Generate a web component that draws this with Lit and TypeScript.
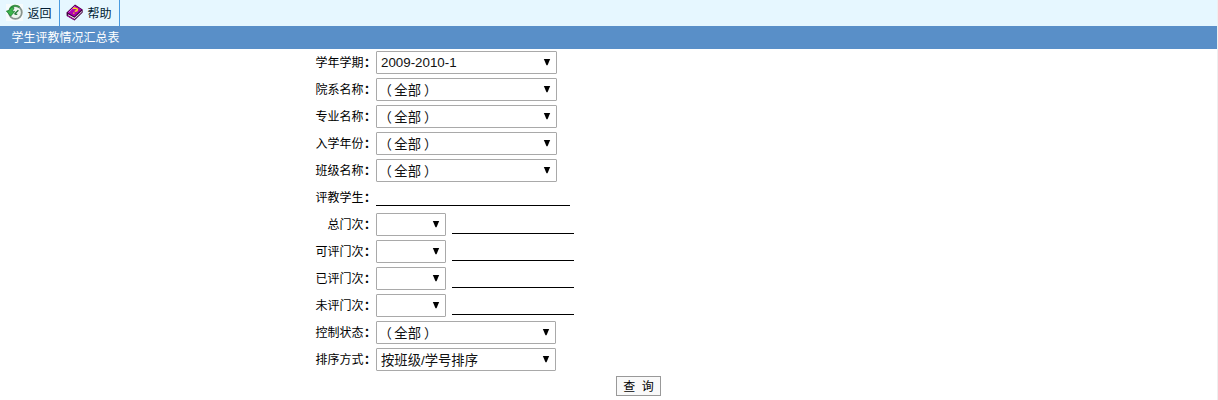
import { LitElement, html, css, svg, nothing } from "lit";
import { customElement, property } from "lit/decorators.js";
import { classMap } from "lit/directives/class-map.js";

interface Row {
  label: string;
  kind: "wide" | "mid" | "text" | "count";
  value?: string;
  cjk?: boolean;
}

const ROWS: Row[] = [
  { label: "学年学期", kind: "wide", value: "2009-2010-1" },
  { label: "院系名称", kind: "wide", value: "（全部）", cjk: true },
  { label: "专业名称", kind: "wide", value: "（全部）", cjk: true },
  { label: "入学年份", kind: "wide", value: "（全部）", cjk: true },
  { label: "班级名称", kind: "wide", value: "（全部）", cjk: true },
  { label: "评教学生", kind: "text" },
  { label: "总门次", kind: "count" },
  { label: "可评门次", kind: "count" },
  { label: "已评门次", kind: "count" },
  { label: "未评门次", kind: "count" },
  { label: "控制状态", kind: "mid", value: "（全部）", cjk: true },
  { label: "排序方式", kind: "mid", value: "按班级/学号排序", cjk: true },
];

@customElement("select-box")
class SelectBox extends LitElement {
  @property() value = "";
  @property({ type: Boolean }) cjk = false;

  static styles = css`
    :host {
      display: flex;
      box-sizing: border-box;
      height: 23px;
      border: 1px solid #a9a9a9;
      border-radius: 1px;
      background: #fff;
      padding: 0 5px 0 4px;
      justify-content: space-between;
      font: 13.33px/21px "Liberation Sans", "Noto Sans CJK SC", sans-serif;
      color: #111;
    }
    .value {
      white-space: nowrap;
    }
    .cjk {
      line-height: 23px;
    }
    .open {
      margin: 0 2.5px 0 -2.5px;
    }
    .close {
      margin-left: 3px;
    }
    .arrow {
      display: block;
      margin-top: 6px;
      flex: none;
    }
  `;

  private text() {
    const m = /^（(.+)）$/.exec(this.value);
    return m ? html`<span class="open">（</span>${m[1]}<span class="close">）</span>` : this.value;
  }

  render() {
    return html`<span class=${classMap({ value: true, cjk: this.cjk })}>${this.text()}</span>
      <svg class="arrow" width="8" height="8" viewBox="0 0 8 8">
        <path d="M0.8 1H7.2L4.5 7.2H3.5Z" fill="#000" />
      </svg>`;
  }
}

const clockIcon = svg`
  <path d="M0 0H17V17H0Z" fill="#f6fbfc"/>
  <circle cx="9.4" cy="8.5" r="6.4" fill="#edf5ee" stroke="#87938d" stroke-width="1.8"/>
  <path d="M3.9 5A6.3 6.3 0 0 1 13.5 3.2" fill="none" stroke="#3c9347" stroke-width="2"/>
  <path d="M0.4 7L3 6.6C3.8 4.6 5.2 3.4 7 2.8L8 5C6.8 5.6 6.4 6.2 6.2 7L8.8 7.4L4.6 12.2Z" fill="#3ab44a" stroke="#16742b" stroke-width=".7"/>
  <path d="M8.5 10L12.4 6.2M8.5 10L11.3 10.4" fill="none" stroke="#267b3a" stroke-width="1.3"/>`;

const bookIcon = svg`
  <path d="M0.5 8.5L9 0.5L16.7 5.4V8.5L8.5 16.5L0.7 12Z" fill="#42003f"/>
  <path d="M2 10.3L8.5 13.8L15.9 6.9V8L8.5 15L2 11.3Z" fill="#f3e9f3"/>
  <path d="M1.6 8.5L9 1.5L15.5 5.6L8.4 12.5Z" fill="#b000b0"/>
  <path d="M2.6 8.4L9 2.4" fill="none" stroke="#e35ae3"/>
  <path d="M7 4.6L8.9 4.1L11.4 5.2L11 6.6L8.7 7.4M7.3 8.9L8.4 9.4" fill="none" stroke="#ffdf18" stroke-width="1.4"/>
  <path d="M1.6 12L8.5 15.8" stroke="#c000b5" fill="none" stroke-width=".8"/>`;

@customElement("app-root")
class AppRoot extends LitElement {
  static styles = css`
    :host {
      display: block;
      box-sizing: border-box;
      height: 400px;
      overflow: hidden;
      background: #fff;
      border-right: 1px solid #efefef;
      font: 12px/16px "Noto Sans CJK SC", sans-serif;
      color: #000;
    }
    .toolbar {
      display: flex;
      height: 26px;
      background: #e6f7ff;
    }
    .tool {
      display: flex;
      box-sizing: border-box;
      width: 60px;
      height: 26px;
      padding: 4px 0 0 6px;
      border-right: 1px solid #4a9be0;
      color: #001c33;
    }
    .tool svg {
      flex: none;
      width: 17px;
      height: 17px;
      margin-right: 4.5px;
    }
    .tool span {
      white-space: nowrap;
      line-height: 17px;
    }
    .title {
      height: 23px;
      padding-left: 11.5px;
      background: #598fc8;
      color: #fff;
      line-height: 22px;
    }
    .row {
      display: flex;
      height: 27px;
      box-sizing: border-box;
      padding-top: 2px;
    }
    .label {
      display: flex;
      justify-content: flex-end;
      width: 363.5px;
      line-height: 22px;
    }
    .colon {
      box-sizing: border-box;
      width: 12.5px;
      padding-left: 0.5px;
      line-height: 22px;
      font-weight: 700;
    }
    .wide { width: 181px; }
    .mid { width: 180px; }
    .count { width: 70px; }
    .line {
      box-sizing: border-box;
      border-bottom: 1px solid #000;
    }
    .name {
      width: 194px;
      height: 20px;
    }
    .number {
      width: 122px;
      height: 21px;
      margin-left: 6px;
    }
    .actions {
      display: flex;
      padding: 3px 0 0 616px;
    }
    .query {
      box-sizing: border-box;
      width: 45px;
      height: 20px;
      margin: 0;
      padding: 0;
      border: 1px solid #999;
      border-radius: 0;
      background: #f9f9f9;
      color: #000;
      font: 12px/18px "Noto Sans CJK SC", sans-serif;
      white-space: pre;
      word-spacing: 4px;
    }
  `;

  private field(r: Row) {
    if (r.kind === "text") return html`<div class="line name"></div>`;
    return html`<select-box class=${r.kind} .value=${r.value ?? ""} .cjk=${!!r.cjk}></select-box>
      ${r.kind === "count" ? html`<div class="line number"></div>` : nothing}`;
  }

  render() {
    return html`
      <div class="toolbar">
        <div class="tool"><svg viewBox="0 0 17 17">${clockIcon}</svg><span>返回</span></div>
        <div class="tool"><svg viewBox="0 0 17 17">${bookIcon}</svg><span>帮助</span></div>
      </div>
      <div class="title">学生评教情况汇总表</div>
      ${ROWS.map(
        (r) => html`<div class="row">
          <span class="label">${r.label}</span><span class="colon">：</span>${this.field(r)}
        </div>`
      )}
      <div class="actions"><button class="query">查 询</button></div>
    `;
  }
}
